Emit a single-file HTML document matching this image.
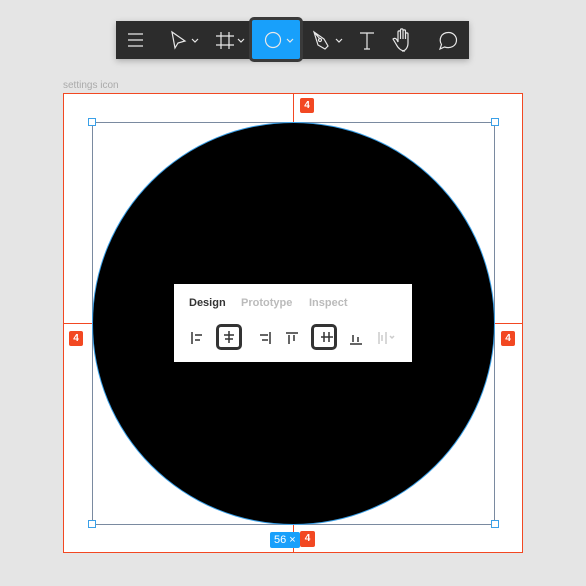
<!DOCTYPE html><html><head><style>
body{margin:0;width:586px;height:586px;background:#e5e5e5;position:relative;overflow:hidden;font-family:"Liberation Sans",sans-serif}
.a{position:absolute}
.badge{position:absolute;background:#f24822;color:#fff;font-size:10px;font-weight:bold;width:14px;height:15px;line-height:15px;text-align:center;border-radius:2px}
</style></head><body>
<div class="a" style="left:63px;top:80px;font-size:10px;color:#aaa">settings icon</div>
<div class="a" style="left:63px;top:93px;width:460px;height:460px;background:#fff;border:1px solid #f24822;box-sizing:border-box"></div>
<div class="a" style="left:293px;top:93px;width:1px;height:460px;background:#f24822"></div>
<div class="a" style="left:63px;top:323px;width:460px;height:1px;background:#f24822"></div>
<div class="a" style="left:92px;top:122px;width:403px;height:403px;border:1px solid #7a8aa0;box-sizing:border-box"></div>
<div class="a" style="left:93px;top:123px;width:401px;height:401px;border-radius:50%;background:#000;box-shadow:0 0 0 1px #3aa0e8"></div>
<div class="a" style="left:88px;top:118px;width:6px;height:6px;border:1px solid #3aa0e8;background:#fff"></div>
<div class="a" style="left:491px;top:118px;width:6px;height:6px;border:1px solid #3aa0e8;background:#fff"></div>
<div class="a" style="left:88px;top:520px;width:6px;height:6px;border:1px solid #3aa0e8;background:#fff"></div>
<div class="a" style="left:491px;top:520px;width:6px;height:6px;border:1px solid #3aa0e8;background:#fff"></div>
<div class="badge" style="left:300px;top:98px">4</div>
<div class="badge" style="left:69px;top:331px">4</div>
<div class="badge" style="left:501px;top:331px">4</div>
<div class="a" style="left:270px;top:532px;width:30px;height:16px;background:#18a0fb;color:#fff;font-size:11px;line-height:16px;border-radius:2px;padding-left:4px;box-sizing:border-box">56 ×</div>
<div class="badge" style="left:300px;top:531px;height:16px;width:15px">4</div>
<div class="a" style="left:174px;top:284px;width:238px;height:78px;background:#fff">
<div class="a" style="left:15px;top:13px;font-size:11px;color:#333;font-weight:bold">Design</div>
<div class="a" style="left:67px;top:13px;font-size:11px;color:#bbb;font-weight:bold">Prototype</div>
<div class="a" style="left:135px;top:13px;font-size:11px;color:#bbb;font-weight:bold">Inspect</div>
<div class="a" style="left:42px;top:40px;width:26px;height:26px;border:3px solid #333;border-radius:5px;box-sizing:border-box"></div>
<div class="a" style="left:137px;top:40px;width:26px;height:26px;border:3px solid #333;border-radius:5px;box-sizing:border-box"></div>
<svg class="a" style="left:0;top:0" width="238" height="78" fill="none" stroke="#333" stroke-width="1.5">
<path d="M18 48v12M21 51h7M21 56h5"/>
<path d="M55 47v12M50 51h10M51 55h8"/>
<path d="M96 48v12M86 51h8M88 56h6"/>
<path d="M112 49h12M115 51v9M120 51v6"/>
<path d="M147 53h12M150 48v10M155 48v10"/>
<path d="M176 60h12M179 51v7M184 53v5"/>
<path d="M205 48v12M212 48v12M208 51v6M216 52l2 2 2-2" stroke="#ccc"/>
</svg></div>
<div class="a" style="left:116px;top:21px;width:353px;height:38px;background:#2c2c2c;box-shadow:0 2px 6px rgba(0,0,0,.25)"></div>
<div class="a" style="left:249px;top:17px;width:54px;height:45px;background:#18a0fb;border:3px solid #3a3a3a;border-radius:5px;box-sizing:border-box"></div>
<svg class="a" style="left:116px;top:21px" width="353" height="38" fill="none" stroke="#e8e8e8" stroke-width="1.2">
<path d="M12 13h15M12 19h15M12 25h15"/>
<path d="M56 11l3 16 3-5 7-2z"/><path d="M76 18l3 3 3-3"/>
<path d="M105 11v17M113 11v17M100 15h18M100 24h18"/><path d="M122 18l3 3 3-3"/>
<circle cx="157" cy="19" r="7.5"/><path d="M171 18l3 3 3-3"/>
<path d="M198 11l4 13 7 4 3-3-4-7zM198 11l6 7"/><circle cx="204" cy="19" r="1.5"/><path d="M220 18l3 3 3-3"/>
<path d="M244 12h14M251 12v16M248 28h6"/>
<path d="M289 30c-4 0-7-3-9-7l-3-5c1-1 3-1 4 1l1 2v-10c0-1.5 2.5-1.5 2.5 0v7-9c0-1.5 2.5-1.5 2.5 0v9-8c0-1.5 2.5-1.5 2.5 0v8-5c0-1.5 2.5-1.5 2.5 0v9c0 5-3 8-6 8z"/>
<path d="M324 28l1.5-4.5c-3-5-0.5-12 7-12 5 0 8 4 8 7.5 0 6-6 9-12 7z"/>
</svg>
</body></html>
